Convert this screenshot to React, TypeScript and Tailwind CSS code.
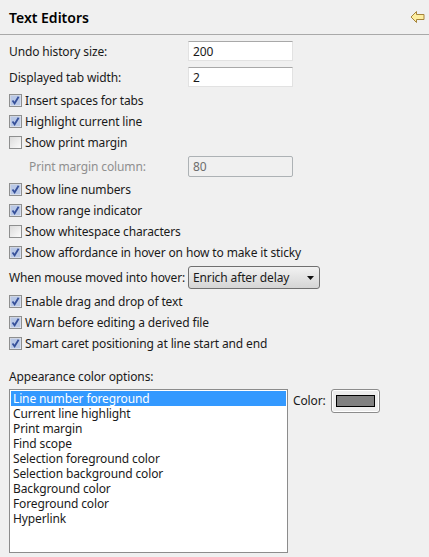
const font = { fontFamily: '"Noto Sans", "Noto Sans CJK KR", sans-serif' };

function Check({ label, checked = false }: { label: string; checked?: boolean }) {
  return (
    <div className="flex items-center h-[21px] pl-[9px] gap-[3px]">
      <span className="w-[13px] h-[13px] border border-[#8e8f8f] bg-gradient-to-br from-[#dcdcdc] to-[#fbfbfb] flex items-center justify-center shrink-0">
        {checked && (
          <svg width="11" height="11" viewBox="0 0 11 11">
            <rect x="0.5" y="0.5" width="10" height="10" fill="#b9c8e6" />
            <path d="M2.5 5.5 L4.6 8.3 L8.6 1.8" fill="none" stroke="#36509a" strokeWidth="1.8" />
          </svg>
        )}
      </span>
      <span className="whitespace-nowrap">{label}</span>
    </div>
  );
}

const colors = [
  'Current line highlight',
  'Print margin',
  'Find scope',
  'Selection foreground color',
  'Selection background color',
  'Background color',
  'Foreground color',
  'Hyperlink',
];

export default function App() {
  return (
    <div className="w-[429px] h-[557px] overflow-hidden bg-[#f0f0f0] text-[12px] leading-[15px] tracking-[-0.13px] text-[#1a1a1a]" style={font}>
      <div className="h-[35px] border-b border-[#a9a9a9] flex items-center justify-between pl-[9px] pr-[4px]">
        <span className="font-semibold text-[14px] tracking-normal text-black">Text Editors</span>
        <svg width="15" height="14" viewBox="0 0 15 14">
          <path d="M1 7 L6.5 1.5 V4.5 H14 V9.5 H6.5 V12.5 Z" fill="#fdeea0" stroke="#a5843c" strokeWidth="1" strokeLinejoin="round" />
        </svg>
      </div>
      <div className="pt-[6px]">
        <div className="flex items-center h-[20px] pl-[9px]">
          <span className="w-[179px] whitespace-nowrap">Undo history size:</span>
          <div className="w-[105px] h-[20px] bg-white border border-[#e2e2e2] border-t-[#a8a8a8] px-[4px] flex items-center">200</div>
        </div>
        <div className="flex items-center h-[20px] pl-[9px] mt-[6px]">
          <span className="w-[179px] whitespace-nowrap">Displayed tab width:</span>
          <div className="w-[105px] h-[20px] bg-white border border-[#e2e2e2] border-t-[#a8a8a8] px-[4px] flex items-center">2</div>
        </div>
        <div className="mt-[3px]">
          <Check label="Insert spaces for tabs" checked />
          <Check label="Highlight current line" checked />
          <Check label="Show print margin" />
        </div>
        <div className="flex items-center h-[21px] pl-[29px] mt-[3px] text-[#8f8f8f]">
          <span className="w-[159px] whitespace-nowrap">Print margin column:</span>
          <div className="w-[105px] h-[21px] bg-[#f0f0f0] border border-[#adb2b5] rounded-[2px] px-[4px] flex items-center text-[#6d6d6d]">80</div>
        </div>
        <div className="mt-[2px]">
          <Check label="Show line numbers" checked />
          <Check label="Show range indicator" checked />
          <Check label="Show whitespace characters" />
          <Check label="Show affordance in hover on how to make it sticky" checked />
        </div>
        <div className="flex items-center h-[23px] pl-[9px] mt-[3px]">
          <span className="w-[179px] whitespace-nowrap">When mouse moved into hover:</span>
          <div className="w-[132px] h-[23px] border border-[#707070] rounded-[3px] bg-gradient-to-b from-[#f2f2f2] to-[#d5d5d5] pl-[4px] pr-[5px] flex items-center justify-between">
            <span>Enrich after delay</span>
            <svg width="7" height="4" viewBox="0 0 7 4"><path d="M0 0 H7 L3.5 4 Z" fill="#111" /></svg>
          </div>
        </div>
        <div className="mt-[2px]">
          <Check label="Enable drag and drop of text" checked />
          <Check label="Warn before editing a derived file" checked />
          <Check label="Smart caret positioning at line start and end" checked />
        </div>
        <div className="pl-[9px] mt-[15px] h-[15px]">Appearance color options:</div>
        <div className="flex items-start pl-[9px] mt-[5px]">
          <div className="w-[279px] h-[164px] bg-white border border-[#8c8c8c] p-[1px]">
            <div className="h-[15px] pl-[2px] bg-[#3399ff] text-white">Line number foreground</div>
            {colors.map((c) => (
              <div key={c} className="h-[15px] pl-[2px] text-[#1a1a1a]">{c}</div>
            ))}
          </div>
          <span className="ml-[5px] mt-[4px] w-[38px]">Color:</span>
          <div className="w-[49px] h-[24px] border border-[#8c8c8c] rounded-[3px] bg-[#ededed] flex items-center justify-center shadow-[inset_0_0_0_1px_#ffffff]">
            <div className="w-[39px] h-[12px] bg-[#808080] border border-black" />
          </div>
        </div>
      </div>
    </div>
  );
}
